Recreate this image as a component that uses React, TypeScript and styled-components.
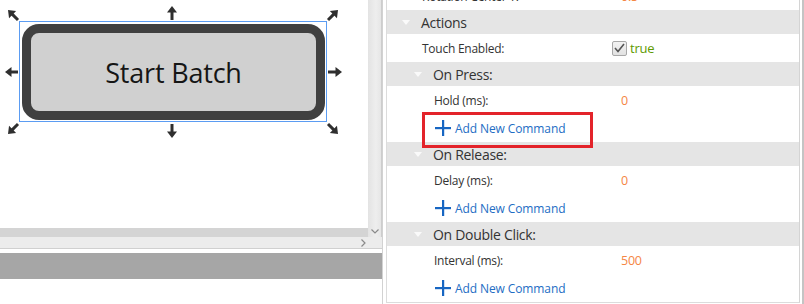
import React from "react";
import styled, { createGlobalStyle } from "styled-components";

const GlobalStyle = createGlobalStyle`
  html, body { margin: 0; padding: 0; background: #fff; }
  body {
    width: 804px; height: 304px; overflow: hidden;
    font-family: "Open Sans", "Noto Sans", sans-serif;
  }
  * { box-sizing: border-box; }
`;

const Layout = styled.div`
  display: flex;
  width: 804px;
  height: 304px;
`;

/* ---------- left: design canvas ---------- */
const LeftPane = styled.div`
  width: 383px;
  height: 304px;
  display: flex;
  flex-direction: column;
  border-right: 1px solid #d2d2d2;
`;

const CanvasArea = styled.div`
  display: flex;
  height: 237px;
`;

const CanvasColumn = styled.div`
  width: 368px;
  display: flex;
  flex-direction: column;
`;

const Canvas = styled.div`
  position: relative;
  height: 228px;
  background: #fff;
  overflow: hidden;
`;

const HThumb = styled.div`
  height: 9px;
  background: #d4d4d4;
`;

const VScroll = styled.div`
  width: 14px;
  display: flex;
  flex-direction: column;
  justify-content: flex-end;
  align-items: center;
  padding-bottom: 3px;
  background: linear-gradient(to right, #e3e3e3, #eeeeee 60%, #e6e6e6);
  border-right: 1px solid #cdcdcd;
`;

const HTrack = styled.div`
  height: 12px;
  display: flex;
  align-items: center;
  justify-content: flex-end;
  padding-right: 16px;
  background: #ececec;
  border-bottom: 1px solid #d0d0d0;
`;

const Spacer = styled.div`
  height: 4px;
`;

const GrayBand = styled.div`
  height: 26px;
  background: #a6a6a6;
`;

const Selection = styled.div`
  position: absolute;
  left: 19px;
  top: 21px;
  width: 308px;
  height: 101px;
  border: 1px solid #5b9cf2;
  padding: 2px 1px 1px 2px;
  display: flex;
`;

const WidgetButton = styled.div`
  flex: 1;
  display: flex;
  align-items: center;
  justify-content: center;
  background: #d0d0d0;
  border: 9px solid #404040;
  border-radius: 17px;
  font-size: 27px;
  color: #151515;
  letter-spacing: -0.2px;
`;

const HandleLayer = styled.svg`
  position: absolute;
  left: 0;
  top: 0;
  pointer-events: none;
`;

/* ---------- right: properties ---------- */
const Gap = styled.div`
  width: 3px;
`;

const RightFrame = styled.div`
  flex: 1;
  display: flex;
  padding-right: 2px;
  border-right: 2px solid #c4c4c4;
`;

const RightPane = styled.div`
  flex: 1;
  height: 303px;
  overflow: hidden;
  border-left: 1px solid #dcdcdc;
  border-right: 1px solid #d4d4d4;
  border-bottom: 1px solid #dcdcdc;
`;

const PropList = styled.div`
  margin-top: -18px;
  display: flex;
  flex-direction: column;
`;

const HeaderRow = styled.div<{ $level: number }>`
  height: 24px;
  display: flex;
  align-items: center;
  gap: 11px;
  padding-left: ${(p) => (p.$level === 1 ? 15 : 27)}px;
  background: #e5e5e5;
  font-size: 14px;
  letter-spacing: -0.3px;
  color: #333;
`;

const PropRow = styled.div<{ $level: number }>`
  height: 28px;
  display: flex;
  align-items: center;
  font-size: 12px;
  letter-spacing: -0.25px;
  color: #333;
  padding-left: ${(p) => (p.$level === 1 ? 35 : 47)}px;
`;

const Label = styled.span<{ $level: number }>`
  width: ${(p) => (p.$level === 1 ? 190 : 178)}px;
`;

const Value = styled.span`
  padding-left: 9px;
  color: #f58644;
  font-size: 12.5px;
`;

const TrueValue = styled.span`
  color: #5e9a00;
  font-size: 13px;
  margin-left: 3px;
`;

const Checkbox = styled.span`
  width: 15px;
  height: 15px;
  border: 1px solid #a8a8a8;
  border-radius: 2px;
  background: linear-gradient(#f2f2f2, #e2e2e2);
  display: inline-flex;
  align-items: center;
  justify-content: center;
`;

const AddRow = styled.div<{ $highlight?: boolean }>`
  position: relative;
  height: 28px;
  display: flex;
  align-items: center;
  gap: 4px;
  padding-left: 48px;
  font-size: 12px;
  letter-spacing: -0.1px;
  color: #1d6dc4;
  &::after {
    content: "";
    display: ${(p) => (p.$highlight ? "block" : "none")};
    position: absolute;
    left: 35px;
    top: -2px;
    width: 165px;
    height: 30px;
    border: 3px solid #e3232a;
  }
`;

const Triangle = () => (
  <svg width="8" height="5" viewBox="0 0 8 5">
    <polygon points="0,0 8,0 4,5" fill="#fafafa" />
  </svg>
);

const Plus = () => (
  <svg width="16" height="16" viewBox="0 0 16 16">
    <rect x="7" y="0" width="2.2" height="16" fill="#1766c2" />
    <rect x="0" y="7" width="16" height="2.2" fill="#1766c2" />
  </svg>
);

function arrow(tx: number, ty: number, hx: number, hy: number, key: string) {
  const dx = hx - tx;
  const dy = hy - ty;
  const len = Math.hypot(dx, dy);
  const ux = dx / len;
  const uy = dy / len;
  const hl = 6.5;
  const hw = 5;
  const bx = hx - ux * hl;
  const by = hy - uy * hl;
  const pts = `${hx},${hy} ${bx - uy * hw},${by + ux * hw} ${bx + uy * hw},${by - ux * hw}`;
  return (
    <g key={key}>
      <line x1={tx} y1={ty} x2={bx + ux} y2={by + uy} stroke="#2f2f2f" strokeWidth="3" />
      <polygon points={pts} fill="#2f2f2f" />
    </g>
  );
}

const Handles = () => (
  <HandleLayer width="350" height="145" viewBox="0 0 350 145">
    {arrow(172, 20, 172, 6, "t")}
    {arrow(172, 124, 172, 138, "b")}
    {arrow(18, 72, 5, 72, "l")}
    {arrow(328, 72, 342, 72, "r")}
    {arrow(18, 20, 8, 10, "tl")}
    {arrow(328, 20, 338, 10, "tr")}
    {arrow(18, 124, 8, 134, "bl")}
    {arrow(328, 124, 338, 134, "br")}
  </HandleLayer>
);

const ChevronDown = () => (
  <svg width="8" height="5" viewBox="0 0 8 5">
    <polyline points="0.5,0.5 4,4 7.5,0.5" fill="none" stroke="#8a8a8a" strokeWidth="1.2" />
  </svg>
);

const ChevronRight = () => (
  <svg width="5" height="8" viewBox="0 0 5 8">
    <polyline points="0.5,0.5 4,4 0.5,7.5" fill="none" stroke="#8a8a8a" strokeWidth="1.2" />
  </svg>
);

const CheckMark = () => (
  <svg width="11" height="10" viewBox="0 0 11 10">
    <polyline points="1,5 4,8.5 10,1" fill="none" stroke="#555" strokeWidth="1.6" />
  </svg>
);

export default function App() {
  return (
    <>
      <GlobalStyle />
      <Layout>
        <LeftPane>
          <CanvasArea>
            <CanvasColumn>
              <Canvas>
                <Selection>
                  <WidgetButton>Start Batch</WidgetButton>
                </Selection>
                <Handles />
              </Canvas>
              <HThumb />
            </CanvasColumn>
            <VScroll>
              <ChevronDown />
            </VScroll>
          </CanvasArea>
          <HTrack>
            <ChevronRight />
          </HTrack>
          <Spacer />
          <GrayBand />
        </LeftPane>
        <Gap />
        <RightFrame>
          <RightPane>
            <PropList>
              <PropRow $level={1}>
                <Label $level={1}>Rotation Center Y:</Label>
                <Value>0.5</Value>
              </PropRow>
              <HeaderRow $level={1}>
                <Triangle />
                <span>Actions</span>
              </HeaderRow>
              <PropRow $level={1}>
                <Label $level={1}>Touch Enabled:</Label>
                <Checkbox>
                  <CheckMark />
                </Checkbox>
                <TrueValue>true</TrueValue>
              </PropRow>
              <HeaderRow $level={2}>
                <Triangle />
                <span>On Press:</span>
              </HeaderRow>
              <PropRow $level={2}>
                <Label $level={2}>Hold (ms):</Label>
                <Value>0</Value>
              </PropRow>
              <AddRow $highlight>
                <Plus />
                <span>Add New Command</span>
              </AddRow>
              <HeaderRow $level={2}>
                <Triangle />
                <span>On Release:</span>
              </HeaderRow>
              <PropRow $level={2}>
                <Label $level={2}>Delay (ms):</Label>
                <Value>0</Value>
              </PropRow>
              <AddRow>
                <Plus />
                <span>Add New Command</span>
              </AddRow>
              <HeaderRow $level={2}>
                <Triangle />
                <span>On Double Click:</span>
              </HeaderRow>
              <PropRow $level={2}>
                <Label $level={2}>Interval (ms):</Label>
                <Value>500</Value>
              </PropRow>
              <AddRow>
                <Plus />
                <span>Add New Command</span>
              </AddRow>
            </PropList>
          </RightPane>
        </RightFrame>
      </Layout>
    </>
  );
}
